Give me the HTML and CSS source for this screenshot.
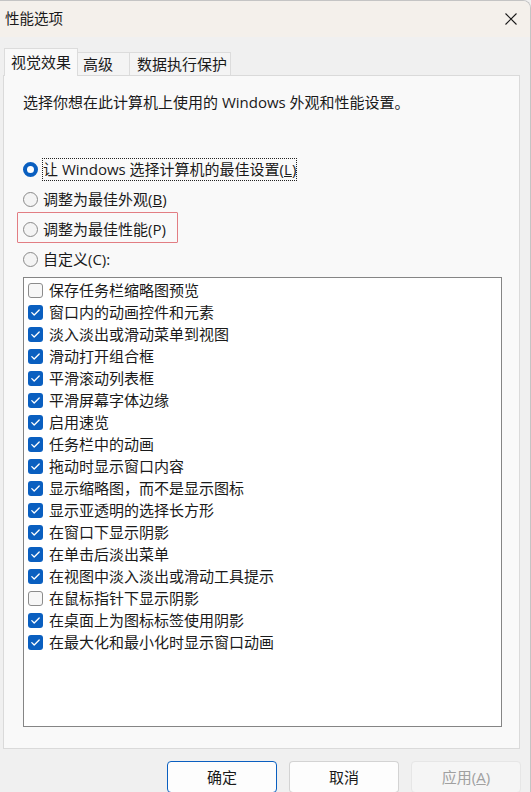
FILE: index.html
```html
<!DOCTYPE html>
<html lang="zh-CN">
<head>
<meta charset="utf-8">
<title>性能选项</title>
<link rel="stylesheet" href="styles.css">
</head>
<body>
<div class="window">
  <div class="titlebar">
    <span class="title">性能选项</span>
    <svg class="close" width="12" height="12" viewBox="0 0 12 12"><path d="M0.5 0.5 L11.5 11.5 M11.5 0.5 L0.5 11.5" stroke="#1b1b1b" stroke-width="1.1" fill="none"/></svg>
  </div>
  <div class="body">
    <div class="tabs">
      <div class="tab active">视觉效果</div>
      <div class="tab t2">高级</div>
      <div class="tab t3">数据执行保护</div>
    </div>
    <div class="panel">
      <p class="desc">选择你想在此计算机上使用的 Windows 外观和性能设置。</p>
      <div class="radios">
        <div class="radio-row"><span class="radio checked"></span><span class="label focus">让 Windows 选择计算机的最佳设置(<u>L</u>)</span></div>
        <div class="radio-row"><span class="radio"></span><span class="label">调整为最佳外观(<u>B</u>)</span></div>
        <div class="radio-row highlighted"><span class="radio"></span><span class="label">调整为最佳性能(P)</span><span class="mark"></span></div>
        <div class="radio-row"><span class="radio"></span><span class="label">自定义(C):</span></div>
      </div>
      <div class="listbox">
        <div class="item"><span class="cb"></span><span>保存任务栏缩略图预览</span></div>
        <div class="item"><span class="cb on"><svg viewBox="0 0 15 15"><path d="M3.8 7.6 L6.2 10 L11.2 5" /></svg></span><span>窗口内的动画控件和元素</span></div>
        <div class="item"><span class="cb on"><svg viewBox="0 0 15 15"><path d="M3.8 7.6 L6.2 10 L11.2 5" /></svg></span><span>淡入淡出或滑动菜单到视图</span></div>
        <div class="item"><span class="cb on"><svg viewBox="0 0 15 15"><path d="M3.8 7.6 L6.2 10 L11.2 5" /></svg></span><span>滑动打开组合框</span></div>
        <div class="item"><span class="cb on"><svg viewBox="0 0 15 15"><path d="M3.8 7.6 L6.2 10 L11.2 5" /></svg></span><span>平滑滚动列表框</span></div>
        <div class="item"><span class="cb on"><svg viewBox="0 0 15 15"><path d="M3.8 7.6 L6.2 10 L11.2 5" /></svg></span><span>平滑屏幕字体边缘</span></div>
        <div class="item"><span class="cb on"><svg viewBox="0 0 15 15"><path d="M3.8 7.6 L6.2 10 L11.2 5" /></svg></span><span>启用速览</span></div>
        <div class="item"><span class="cb on"><svg viewBox="0 0 15 15"><path d="M3.8 7.6 L6.2 10 L11.2 5" /></svg></span><span>任务栏中的动画</span></div>
        <div class="item"><span class="cb on"><svg viewBox="0 0 15 15"><path d="M3.8 7.6 L6.2 10 L11.2 5" /></svg></span><span>拖动时显示窗口内容</span></div>
        <div class="item"><span class="cb on"><svg viewBox="0 0 15 15"><path d="M3.8 7.6 L6.2 10 L11.2 5" /></svg></span><span>显示缩略图，而不是显示图标</span></div>
        <div class="item"><span class="cb on"><svg viewBox="0 0 15 15"><path d="M3.8 7.6 L6.2 10 L11.2 5" /></svg></span><span>显示亚透明的选择长方形</span></div>
        <div class="item"><span class="cb on"><svg viewBox="0 0 15 15"><path d="M3.8 7.6 L6.2 10 L11.2 5" /></svg></span><span>在窗口下显示阴影</span></div>
        <div class="item"><span class="cb on"><svg viewBox="0 0 15 15"><path d="M3.8 7.6 L6.2 10 L11.2 5" /></svg></span><span>在单击后淡出菜单</span></div>
        <div class="item"><span class="cb on"><svg viewBox="0 0 15 15"><path d="M3.8 7.6 L6.2 10 L11.2 5" /></svg></span><span>在视图中淡入淡出或滑动工具提示</span></div>
        <div class="item"><span class="cb"></span><span>在鼠标指针下显示阴影</span></div>
        <div class="item"><span class="cb on"><svg viewBox="0 0 15 15"><path d="M3.8 7.6 L6.2 10 L11.2 5" /></svg></span><span>在桌面上为图标标签使用阴影</span></div>
        <div class="item"><span class="cb on"><svg viewBox="0 0 15 15"><path d="M3.8 7.6 L6.2 10 L11.2 5" /></svg></span><span>在最大化和最小化时显示窗口动画</span></div>
      </div>
    </div>
    <div class="buttons">
      <div class="btn default">确定</div>
      <div class="btn">取消</div>
      <div class="btn disabled">应用(<u>A</u>)</div>
    </div>
  </div>
</div>
</body>
</html>
```

FILE: styles.css
```css
* { box-sizing: border-box; }
html, body {
  margin: 0;
  padding: 0;
  width: 531px;
  height: 792px;
  overflow: hidden;
  background: #f0f0f0;
}
body {
  font-family: "Open Sans", "Noto Sans CJK SC", sans-serif;
  font-size: 15px;
  color: #1a1a1a;
}
.window {
  width: 531px;
  height: 792px;
  border-top: 1px solid #c4c4c4;
  border-right: 1px solid #c4c4c4;
  border-top-right-radius: 8px;
  overflow: hidden;
  background: #f0f0f0;
}
.titlebar {
  height: 36px;
  background: #f4f0eb;
  display: flex;
  align-items: center;
  justify-content: space-between;
  padding: 0 13px 0 5px;
}
.title {
  font-size: 14.5px;
  line-height: 20px;
  color: #1a1a1a;
}
.close { display: block; }
.body {
  padding: 11px 0 0 3px;
}
.tabs {
  display: flex;
  align-items: flex-end;
  height: 28px;
  margin-bottom: -1px;
  position: relative;
  z-index: 1;
}
.tab {
  height: 23px;
  margin-bottom: 1px;
  background: #f4f4f4;
  border: 1px solid #dcdcdc;
  border-bottom: none;
  line-height: 22px;
  white-space: nowrap;
}
.tab.active {
  height: 28px;
  margin-bottom: 0;
  margin-left: 1px;
  width: 74px;
  background: #f9f9f9;
  line-height: 20px;
  padding: 3px 0 0 6px;
}
.tab.t2 {
  width: 52px;
  border-left: none;
  padding-left: 5px;
}
.tab.t3 {
  width: 101px;
  border-left: none;
  padding-left: 7px;
}
.panel {
  width: 517px;
  background: #f9f9f9;
  border: 1px solid #dadada;
  padding: 16px 17px 21px 19px;
}
.desc {
  margin: 0;
  line-height: 20px;
  white-space: nowrap;
}
.radios {
  margin-top: 42px;
}
.radio-row {
  height: 30px;
  display: flex;
  align-items: center;
  position: relative;
}
.radio {
  width: 15px;
  height: 15px;
  border-radius: 50%;
  border: 1px solid #8a8a8a;
  background: #f4f4f4;
  flex: none;
}
.radio.checked {
  border: 4px solid #0a5fc0;
  background: #ffffff;
}
.label {
  margin-left: 4px;
  line-height: 21px;
  border: 1px solid transparent;
  white-space: nowrap;
}
.label.focus {
  border: 1px dotted #222;
}
.mark {
  position: absolute;
  left: -6px;
  top: -2px;
  width: 161px;
  height: 31px;
  border: 1.5px solid #e27d83;
  border-radius: 1px;
  pointer-events: none;
}
.listbox {
  margin-top: 3px;
  width: 479px;
  height: 450px;
  background: #ffffff;
  border: 1px solid #858585;
  padding: 1px 0 0 4px;
}
.item {
  height: 22px;
  display: flex;
  align-items: center;
  line-height: 20px;
  white-space: nowrap;
}
.cb {
  width: 15px;
  height: 15px;
  border-radius: 3px;
  border: 1px solid #8c8c8c;
  background: #f7f7f7;
  margin-right: 6px;
  flex: none;
  display: flex;
}
.cb.on {
  border: none;
  background: #0a5fc0;
}
.cb svg {
  width: 15px;
  height: 15px;
  display: block;
}
.cb svg path {
  fill: none;
  stroke: #ffffff;
  stroke-width: 1.3;
  stroke-linecap: round;
  stroke-linejoin: round;
}
.buttons {
  display: flex;
  justify-content: flex-end;
  gap: 12px;
  margin-top: 12px;
  padding-right: 9px;
}
.btn {
  width: 110px;
  height: 32px;
  border: 1px solid #d3d3d3;
  border-bottom-color: #c2c2c2;
  border-radius: 4px;
  background: #fdfdfd;
  display: flex;
  align-items: center;
  justify-content: center;
  line-height: 20px;
  padding-bottom: 1px;
}
.btn.default {
  border: 1px solid #0a5fc0;
}
.btn.disabled {
  background: #f5f5f5;
  border-color: #e6e6e6;
  color: #a0a0a0;
}
```
